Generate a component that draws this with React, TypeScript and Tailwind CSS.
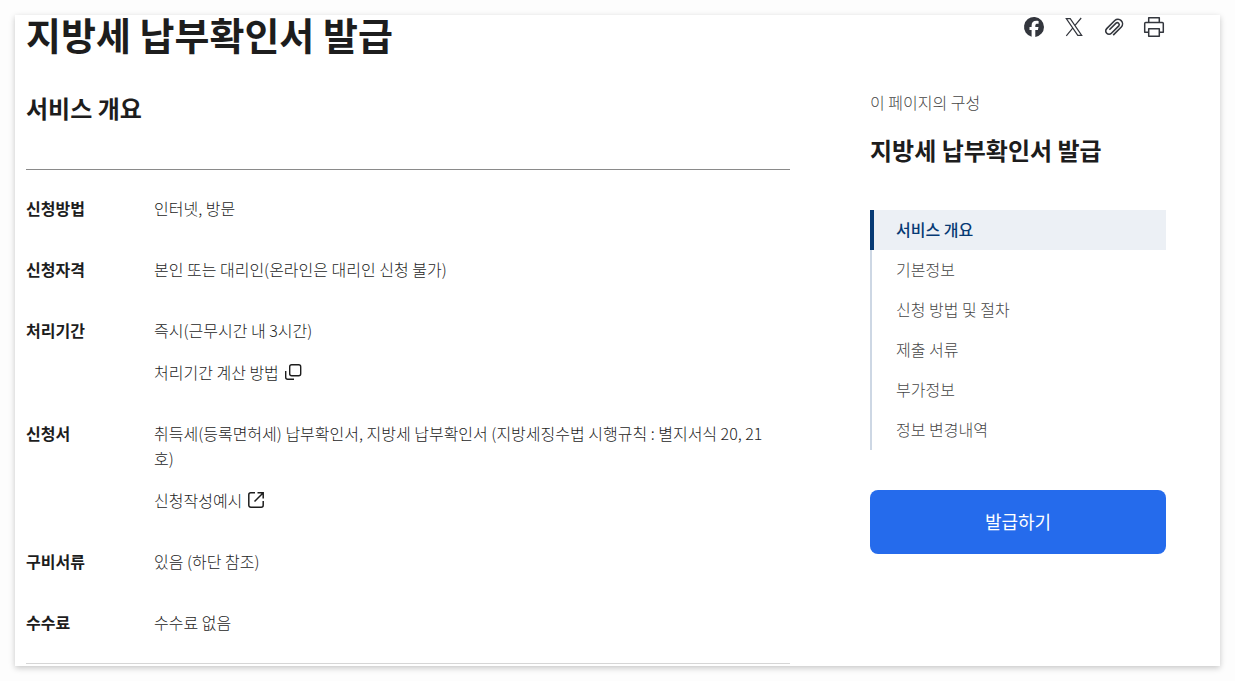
import { useState } from "react";

const sections = ["서비스 개요", "기본정보", "신청 방법 및 절차", "제출 서류", "부가정보", "정보 변경내역"];

const rows = [
  { label: "신청방법", value: "인터넷, 방문" },
  { label: "신청자격", value: "본인 또는 대리인(온라인은 대리인 신청 불가)" },
  {
    label: "처리기간",
    value: "즉시(근무시간 내 3시간)",
    link: { text: "처리기간 계산 방법", icon: PopupIcon },
  },
  {
    label: "신청서",
    value: "취득세(등록면허세) 납부확인서, 지방세 납부확인서 (지방세징수법 시행규칙 : 별지서식 20, 21호)",
    link: { text: "신청작성예시", icon: ExternalIcon },
  },
  { label: "구비서류", value: "있음 (하단 참조)" },
  { label: "수수료", value: "수수료 없음" },
];

const shareLinks = [
  { label: "페이스북 공유", icon: FacebookIcon },
  { label: "X 공유", icon: XIcon },
  { label: "링크 복사", icon: ClipIcon },
  { label: "인쇄", icon: PrintIcon },
];

function FacebookIcon() {
  return (
    <svg width="24" height="24" viewBox="0 0 24 24" fill="currentColor" aria-hidden="true">
      <path d="M22 12a10 10 0 1 0-12.4 9.7V15H7.5v-3h2.1v-1.3c0-3.4 1.5-5 4.9-5 .6 0 1.7.1 2.1.3v2.8c-.2 0-.6 0-1.1 0-1.6 0-2.2.6-2.2 2.2V12h3.2l-.6 3h-2.6v6.9A10 10 0 0 0 22 12Z" />
    </svg>
  );
}

function XIcon() {
  return (
    <svg width="24" height="24" viewBox="0 0 24 24" aria-hidden="true">
      <g fill="none" stroke="currentColor" strokeWidth="1.2">
        <path d="M4.3 3.6h3.9L19.7 20.4h-3.9Z" />
        <path d="M19.2 3 13 10.3M10.9 12.8 4.3 20.8" />
      </g>
    </svg>
  );
}

function ClipIcon() {
  return (
    <svg width="24" height="24" viewBox="0 0 24 24" fill="none" stroke="currentColor" strokeWidth="1.6" aria-hidden="true">
      <path d="m11.2 20.1 8.1-8.1a4.6 4.6 0 0 0-6.5-6.5L4.7 13.6a3.3 3.3 0 0 0 4.7 4.7l7.4-7.4a2 2 0 0 0-2.8-2.8l-6.6 6.6" />
    </svg>
  );
}

function PrintIcon() {
  return (
    <svg width="24" height="24" viewBox="0 0 24 24" fill="none" stroke="currentColor" strokeWidth="1.5" strokeLinejoin="round" aria-hidden="true">
      <path d="M6.7 7.5V2.8h10.6v4.7" />
      <path d="M6.7 17.2h-4V8.5a1 1 0 0 1 1-1h16.6a1 1 0 0 1 1 1v8.7h-4" />
      <path d="M6.7 13.7h10.6v7.5H6.7z" />
    </svg>
  );
}

function PopupIcon() {
  return (
    <svg width="20" height="20" viewBox="0 0 20 20" fill="none" stroke="currentColor" strokeWidth="1.4" aria-hidden="true">
      <rect x="6.7" y="2.7" width="11" height="11" rx="2" />
      <path d="M2.7 9v6.3a2 2 0 0 0 2 2H11" />
    </svg>
  );
}

function ExternalIcon() {
  return (
    <svg width="20" height="20" viewBox="0 0 20 20" fill="none" stroke="currentColor" strokeWidth="1.5" aria-hidden="true">
      <path d="M9 2.8H4.8a2 2 0 0 0-2 2v10.4a2 2 0 0 0 2 2h10.4a2 2 0 0 0 2-2V11" />
      <path d="M11.5 2.8h5.7v5.7M17 3l-8.5 8.5" />
    </svg>
  );
}

export default function App() {
  const [active, setActive] = useState(sections[0]);

  return (
    <div className="min-h-screen bg-[#fdfdfd] p-[15px] font-['Noto_Sans_CJK_KR',sans-serif] text-[#1d1d1d]">
      <div className="flex gap-20 bg-white pb-[2px] pl-[11px] pr-[54px] shadow-[0_2px_6px_rgba(0,0,0,0.22)]">
        <main className="min-w-0 flex-1">
          <h1 className="text-[38px] leading-[38px] font-bold">지방세 납부확인서 발급</h1>
          <h2 className="mt-[37px] text-2xl leading-9 font-bold">서비스 개요</h2>

          <dl className="mt-[43px] flex flex-col gap-9 border-t border-t-[#8a8a8a] border-b border-b-[#d6d6d6] pt-[26px] pb-[28px] text-base leading-[25px]">
            {rows.map((row) => (
              <div key={row.label} className="flex">
                <dt className="w-32 shrink-0 font-bold">{row.label}</dt>
                <dd className="min-w-0 flex-1 pr-3 break-all font-light">
                  <p>{row.value}</p>
                  {row.link && (
                    <a href="#" className="mt-4 flex h-[26px] w-fit items-center gap-1">
                      {row.link.text}
                      <row.link.icon />
                    </a>
                  )}
                </dd>
              </div>
            ))}
          </dl>
        </main>

        <aside className="w-[296px] shrink-0">
          <div className="flex justify-end gap-4 text-[#33363d]">
            {shareLinks.map((s) => (
              <button key={s.label} type="button" aria-label={s.label} className="cursor-pointer">
                <s.icon />
              </button>
            ))}
          </div>

          <p className="mt-[51px] text-base leading-6 font-light text-[#464646]">이 페이지의 구성</p>
          <h2 className="mt-[18px] text-2xl leading-9 font-bold">지방세 납부확인서 발급</h2>

          <nav className="mt-[42px]">
            <ul>
              {sections.map((name) => (
                <li key={name}>
                  <a
                    href="#"
                    onClick={() => setActive(name)}
                    className={`flex h-10 items-center pb-[3px] text-base ${
                      active === name
                        ? "border-l-4 border-[#063a74] bg-[#ecf0f5] pl-[22px] font-medium text-[#063a74]"
                        : "border-l-2 border-[#cdd7e4] pl-6 font-light text-[#464646]"
                    }`}
                  >
                    {name}
                  </a>
                </li>
              ))}
            </ul>
          </nav>

          <button type="button" className="mt-10 h-16 w-full cursor-pointer rounded-lg bg-[#256bec] pb-[3px] text-lg text-white">
            발급하기
          </button>
        </aside>
      </div>
    </div>
  );
}
